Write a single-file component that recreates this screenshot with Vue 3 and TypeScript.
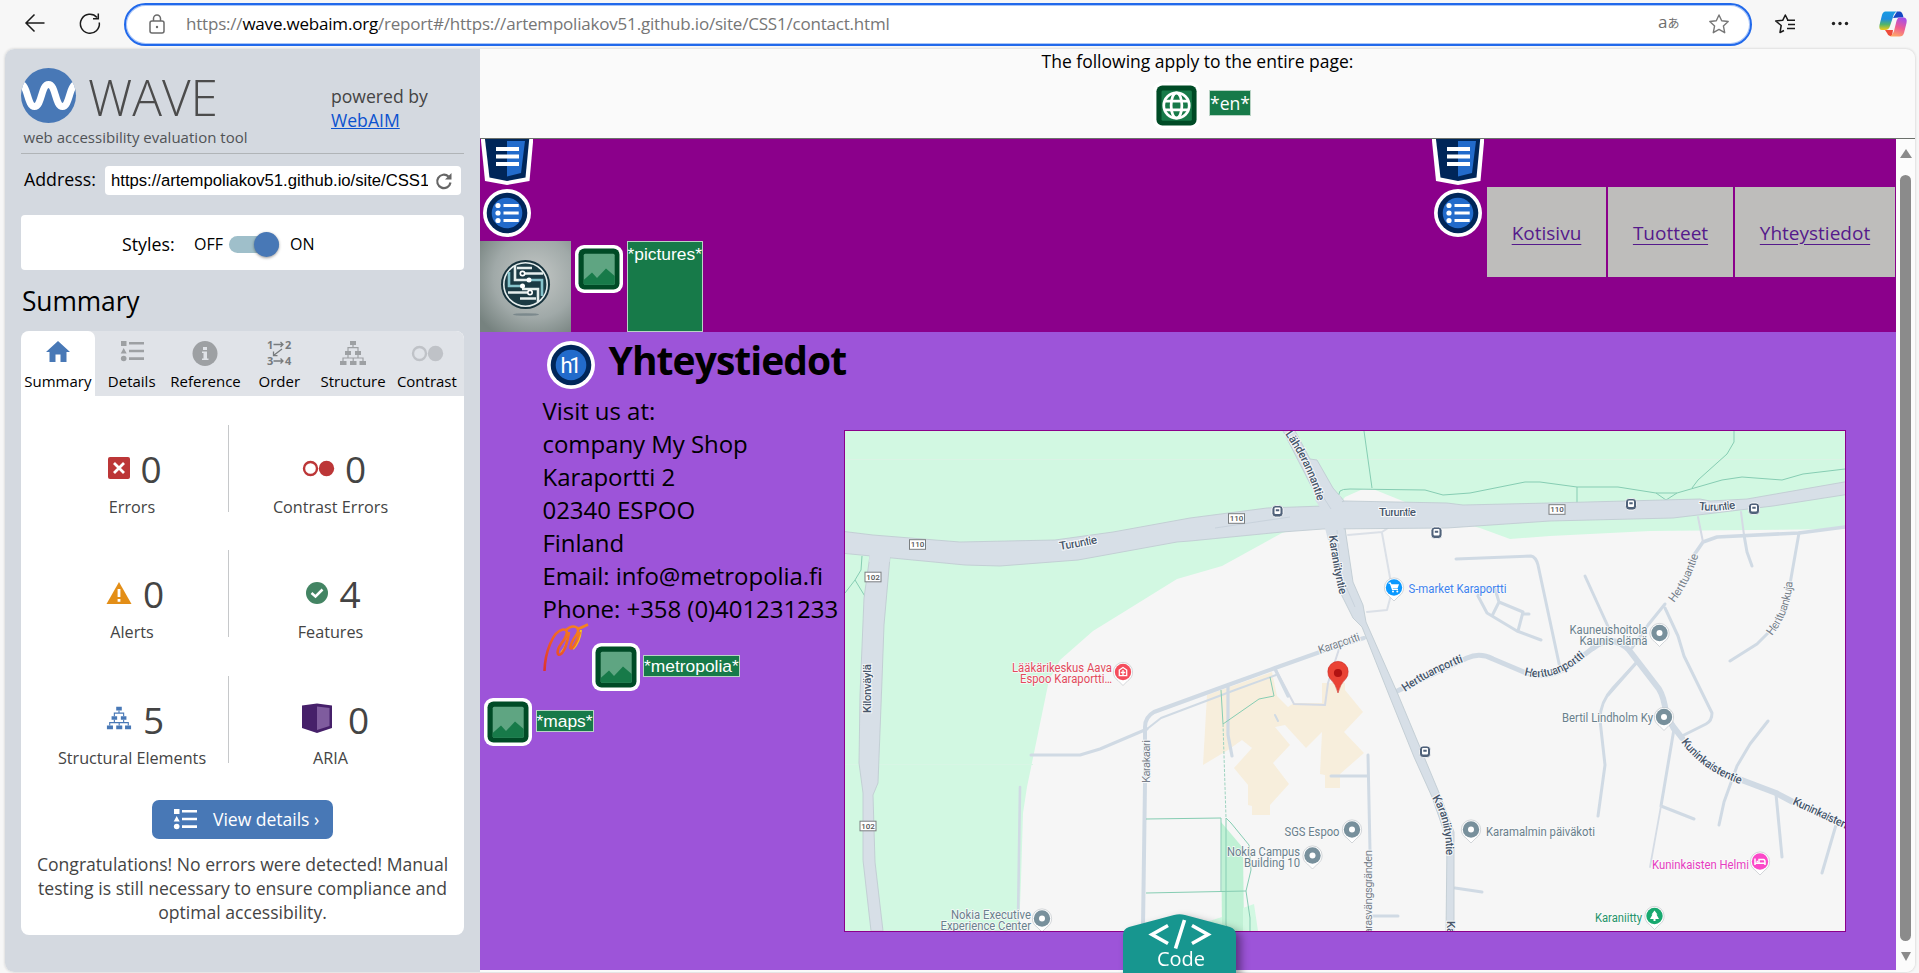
<script setup lang="ts">
interface Tab { id: string; label: string }
interface Stat { id: string; value: number; label: string; gap: number }
interface Road { d: string; w: number; c?: string }
interface Poi { x: number; y: number; color: string; kind: string }
interface PoiLabel { t: string; x: number; y: number; w: number; color: string }
interface RoadLabel { id: string; d: string; t: string; w: number; minor?: boolean }

const tabs: Tab[] = [
  { id: 'home', label: 'Summary' },
  { id: 'list', label: 'Details' },
  { id: 'info', label: 'Reference' },
  { id: 'order', label: 'Order' },
  { id: 'tree', label: 'Structure' },
  { id: 'contrast', label: 'Contrast' },
]

const rows: Stat[][] = [
  [
    { id: 'error', value: 0, label: 'Errors', gap: 10 },
    { id: 'contrast', value: 0, label: 'Contrast Errors', gap: 10 },
  ],
  [
    { id: 'alert', value: 0, label: 'Alerts', gap: 11 },
    { id: 'feature', value: 4, label: 'Features', gap: 11 },
  ],
  [
    { id: 'tree', value: 5, label: 'Structural Elements', gap: 11 },
    { id: 'aria', value: 0, label: 'ARIA', gap: 16 },
  ],
]

const address = ['Visit us at:', 'company My Shop', 'Karaportti 2', '02340 ESPOO', 'Finland', 'Email: info@metropolia.fi', 'Phone: +358 (0)401231233']

const roads: Road[] = [
  { d: 'M1031 755H1080L1100 749 1147 729', w: 3 },
  { d: 'M1143 926L1145 784V727Q1145 717 1154 712L1228 685 1275 668 1320 652 1364 638', w: 4 },
  { d: 'M1147 729L1161 718 1235 690 1276 675', w: 2 },
  { d: 'M1020 787L1018 920', w: 2.6 },
  { d: 'M1228 686V735L1232 756', w: 3.2 },
  { d: 'M1275 668L1294 704 1325 705 1328 683 1340 646', w: 2, c: '#d5dae4' },
  { d: 'M1275 669L1288 696', w: 3.2 },
  { d: 'M1275 715L1278 721', w: 2 },
  { d: 'M1368 755L1370 850M1368 776H1331M1370 916H1398', w: 3 },
  { d: 'M1348 535L1382 532 1388 528M1382 533L1391 583V595L1387 610 1367 612', w: 2, c: '#dbe0e7' },
  { d: 'M1456 559L1531 556Q1536 557 1538 565L1560 668', w: 3 },
  { d: 'M1478 596L1487 613 1517 631 1541 640M1478 596L1481 587 1495 589 1499 602 1492 616M1499 602L1523 612 1518 631M1523 614H1529', w: 3 },
  { d: 'M1393 693L1467 658Q1480 652 1493 659L1526 673Q1550 680 1570 666L1593 648', w: 5 },
  { d: 'M1585 576L1611 633', w: 3 },
  { d: 'M1593 648Q1612 633 1629 650L1659 689Q1664 697 1666 713L1674 729', w: 6 },
  { d: 'M1608 695L1637 662', w: 3 },
  { d: 'M1665 604L1648 625 1632 648', w: 3 },
  { d: 'M1694 555L1703 542 1717 537 1799 533 1845 527', w: 3.6 },
  { d: 'M1703 542L1698 517M1744 535L1741 512', w: 2, c: '#d5dae4' },
  { d: 'M1744 535L1747 552 1752 566', w: 3 },
  { d: 'M1799 533L1790 584M1768 633L1757 644 1730 661', w: 3 },
  { d: 'M1665 608L1678 636 1684 656 1712 713Q1712 721 1706 724L1682 736', w: 3 },
  { d: 'M1637 662L1613 688Q1600 702 1600 720L1605 765 1598 816', w: 3 },
  { d: 'M1674 729L1661 806M1661 806L1694 819', w: 3 },
  { d: 'M1661 806L1650 867', w: 1.8, c: '#d5dce5' },
  { d: 'M1768 721L1750 744 1737 766 1724 802 1719 825', w: 3 },
  { d: 'M1672 725L1682 738M1739 779L1776 793 1793 802', w: 6 },
  { d: 'M1776 794L1782 857', w: 3 },
  { d: 'M1836 825L1822 873', w: 3 },
  { d: 'M1455 888L1482 892', w: 3 },
]

const trails: string[] = [
  'M1364 431L1372 488M1338 497L1340 491Q1342 489 1350 489L1425 490 1443 495 1470 493 1525 482 1540 482 1577 487 1618 487 1656 493 1677 493 1722 480 1742 477 1782 480 1803 474 1845 469',
  'M1734 431V442L1727 454 1698 480 1692 488M1656 493L1666 500 1677 493M1577 487V503',
  'M862 556L861 570 855 580 845 593M855 580L866 598',
  'M1221 690L1223 724 1259 699 1274 696 1270 677',
  'M1146 819L1221 818V891M1146 893L1246 891M1226 818L1231 823 1249 845 1251 870 1246 891 1250 918V931M1226 818V925L1230 931',
]

const roadLabels: RoadLabel[] = [
  { id: 'r1', d: 'M1060 550Q1080 547 1099 543', t: 'Turuntie', w: 38 },
  { id: 'r2', d: 'M1379 516H1420', t: 'Turuntie', w: 37 },
  { id: 'r3', d: 'M1699 510Q1716 512 1739 508', t: 'Turuntie', w: 37 },
  { id: 'r4', d: 'M1285 434Q1307 465 1317 500', t: 'Lähderannantie', w: 75 },
  { id: 'r5', d: 'M1329 536Q1332 563 1341 600', t: 'Karaniityntie', w: 60 },
  { id: 'r6', d: 'M871 713V640', t: 'Kilonväylä', w: 49 },
  { id: 'r7', d: 'M1320 654Q1340 647 1364 639', t: 'Karaportti', w: 43, minor: true },
  { id: 'r8', d: 'M1405 692Q1432 673 1466 661', t: 'Herttuanportti', w: 66 },
  { id: 'r9', d: 'M1524 675Q1554 684 1587 655', t: 'Herttuanportti', w: 67 },
  { id: 'r10', d: 'M1674 603Q1690 583 1699 553', t: 'Herttuantie', w: 54, minor: true },
  { id: 'r11', d: 'M1772 636Q1791 612 1793 578', t: 'Herttuankuja', w: 59, minor: true },
  { id: 'r12', d: 'M1150 783V735', t: 'Karakaari', w: 43, minor: true },
  { id: 'r13', d: 'M1432 798Q1447 820 1446 860', t: 'Karaniityntie', w: 60 },
  { id: 'r14', d: 'M1681 742Q1702 771 1743 785', t: 'Kuninkaistentie', w: 74 },
  { id: 'r15', d: 'M1792 804L1865 838', t: 'Kuninkaistentie', w: 70 },
  { id: 'r16', d: 'M1372 941V846', t: 'Karasvängsgränden', w: 91, minor: true },
  { id: 'r17', d: 'M1447 921V990', t: 'Karaniityntie', w: 60 },
]

const grey = '#78909c'
const pois: Poi[] = [
  { x: 1394, y: 587.5, color: '#0b99ff', kind: 'cart' },
  { x: 1123, y: 672, color: '#f44d5c', kind: 'med' },
  { x: 1659.5, y: 633, color: grey, kind: 'dot' },
  { x: 1664, y: 717, color: grey, kind: 'dot' },
  { x: 1352, y: 829.5, color: grey, kind: 'dot' },
  { x: 1312.5, y: 855.5, color: grey, kind: 'dot' },
  { x: 1471, y: 829.5, color: grey, kind: 'dot' },
  { x: 1760, y: 861.5, color: '#fb48c8', kind: 'bed' },
  { x: 1654.5, y: 916, color: '#18a86f', kind: 'tree' },
  { x: 1042, y: 918.5, color: grey, kind: 'dot' },
]
const lab = '#69808c'
const poiLabels: PoiLabel[] = [
  { t: 'Lääkärikeskus Aava', x: 1012, y: 672, w: 100, color: '#e24a5c' },
  { t: 'Espoo Karaportti…', x: 1020, y: 683, w: 92, color: '#e24a5c' },
  { t: 'S-market Karaportti', x: 1408.5, y: 593, w: 98, color: '#3d82ee' },
  { t: 'Kauneushoitola', x: 1569.5, y: 634, w: 78, color: lab },
  { t: 'Kaunis elämä', x: 1579.5, y: 645, w: 68, color: lab },
  { t: 'Bertil Lindholm Ky', x: 1562, y: 722, w: 91, color: lab },
  { t: 'SGS Espoo', x: 1284.5, y: 835.5, w: 55, color: lab },
  { t: 'Nokia Campus', x: 1227, y: 855.5, w: 73, color: lab },
  { t: 'Building 10', x: 1244, y: 867, w: 56, color: lab },
  { t: 'Karamalmin päiväkoti', x: 1486, y: 835.5, w: 109, color: lab },
  { t: 'Kuninkaisten Helmi', x: 1652, y: 868.5, w: 97, color: '#e63cc0' },
  { t: 'Karaniitty', x: 1595, y: 921.5, w: 47, color: '#25936a' },
  { t: 'Nokia Executive', x: 951, y: 919, w: 80, color: lab },
  { t: 'Experience Center', x: 940.5, y: 930, w: 90.5, color: lab },
]
const stops: number[][] = [[1277.5, 511], [1436.5, 532.5], [1631, 504], [1754, 508.5], [1425, 751.5]]
const shields = [
  { t: '110', x: 917.5, y: 544.5 },
  { t: '110', x: 1236.5, y: 518.5 },
  { t: '110', x: 1557, y: 509.5 },
  { t: '102', x: 873, y: 577 },
  { t: '102', x: 868, y: 826 },
]
</script>

<template>
  <div class="browser">
    <svg class="sprite" aria-hidden="true">
      <symbol id="i-home" viewBox="0 0 28 26"><path d="M14 1L26 12H22.500V22H16.500V14.500H11.500V22H5.500V12H2Z" fill="#4878b6" /></symbol>
      <symbol id="i-list" viewBox="0 0 28 26"><path d="M3 1h5.500v5H3zM5.700 8L8.700 13.500H2.700zM11 2h15v2.600H11zM11 9.700h15v2.600H11zM11 17.300h15v2.600H11z" /><circle cx="5.700" cy="18.500" r="2.800" /></symbol>
      <symbol id="i-info" viewBox="0 0 28 26"><circle cx="14" cy="13.500" r="12.500" /><path d="M12 7h4v3h-4zM11 11.500h5v7h1.500v1.500h-6.500v-1.500h1.500v-5.500H11z" fill="#e0e3e8" /></symbol>
      <symbol id="i-tree" viewBox="0 0 28 26"><path d="M11 1h6v4h-6zM6 11h6v4H6zM16 11h6v4h-6zM1 21h6.500v4H1zM11 21h6.500v4H11zM20.500 21h6.500v4h-6.500z" /><path d="M14 5V8M9 11V7.700H19V11M4 21V18H24V21M14.200 18V21M9 15V18M19 15V18" fill="none" stroke="currentColor" stroke-width="1.200" /></symbol>
      <symbol id="i-contrast" viewBox="0 0 34 26"><circle cx="9.500" cy="13.500" r="6.500" fill="none" stroke="currentColor" stroke-width="2.400" /><circle cx="25.500" cy="13.500" r="7.700" /></symbol>
      <symbol id="i-error" viewBox="0 0 22 26"><rect y="2" width="22" height="22" rx="2" fill="#bc3637" /><path d="M6 8L16 18M16 8L6 18" stroke="#fff" stroke-width="2.800" /></symbol>
      <symbol id="i-alert" viewBox="0 0 26 26"><path d="M13 2L25.500 24H.5Z" fill="#e38e17" /><path d="M11.600 9h2.800v8h-2.800zM11.600 19h2.800v2.700h-2.800z" fill="#fff" /></symbol>
      <symbol id="i-feature" viewBox="0 0 22 26"><circle cx="11" cy="13" r="11" fill="#438463" /><path d="M5.500 13L9.500 16.500 16.500 9.500" fill="none" stroke="#fff" stroke-width="2.500" /></symbol>
      <symbol id="i-aria" viewBox="0 0 30 30"><path d="M0 2.500L15 .5 30 2.500V25L15 30 0 25Z" fill="#46206a" /><path d="M15 3.500L27.500 5V23L15 27Z" fill="#7f5c9e" /></symbol>
      <symbol id="i-shield" viewBox="0 0 52 46"><path d="M-1 -8H53L48.500 42 26 46 4 42Z" fill="#fff" /><path d="M3 -8H49L44.500 38.500 26 42 8.500 38.500Z" fill="#002659" /><path d="M26 2H44L40 34 26 37.500Z" fill="#226bcb" /><path d="M15 10H38M15 17.500H38M15 25H38" stroke="#fff" stroke-width="3.800" /></symbol>
      <symbol id="i-ul" viewBox="0 0 48 48"><circle cx="24" cy="24" r="24" fill="#fff" /><circle cx="24" cy="24" r="20.300" fill="#002659" /><circle cx="24" cy="24" r="15.300" fill="#226bcb" /><g fill="#fff"><circle cx="15" cy="16.500" r="2.600" /><circle cx="15" cy="24" r="2.600" /><circle cx="15" cy="31.500" r="2.600" /><path d="M20.500 14.900h15.200v3.200H20.500zM20.500 22.400h15.200v3.200H20.500zM20.500 29.900h15.200v3.200H20.500z" /></g></symbol>
      <symbol id="i-pic" viewBox="0 0 48 48"><rect width="48" height="48" rx="9" fill="#fff" /><rect x="3.500" y="3.500" width="41" height="41" rx="6" fill="#004b26" /><rect x="8.700" y="8.700" width="31" height="31" rx="1.500" fill="#5fa582" /><path d="M8.700 35L17 27.500 22 33 31 23.500 39.700 31V38.200Q39.700 39.700 38.200 39.700H10.200Q8.700 39.700 8.700 38.200Z" fill="#177a49" /></symbol>
    </svg>

    <header class="toolbar">
      <svg class="nav-icons" viewBox="0 0 124 48" fill="none" stroke="#1b1b1b" stroke-width="1.500">
        <path d="M44.500 23H26M34.500 14.500L26 23 34.500 31.500" />
        <path d="M97 17.500A9.500 9.500 0 1 0 99.300 22.500M98.300 13.500V18.700H93" />
      </svg>
      <div class="omnibox">
        <svg class="lock" viewBox="0 0 18 22" fill="none" stroke="#6b6b6b" stroke-width="1.500"><rect x="2" y="8" width="14" height="12" rx="2" /><path d="M5.500 8V5.500a3.500 3.500 0 0 1 7 0V8" /><circle cx="9" cy="14" r="1.200" fill="#6b6b6b" stroke="none" /></svg>
        <div class="url">https://<b>wave.webaim.org</b>/report#/https://artempoliakov51.github.io/site/CSS1/contact.html</div>
        <div class="translate">a<span>あ</span></div>
        <svg class="star" viewBox="0 0 22 22" fill="none" stroke="#777" stroke-width="1.400" stroke-linejoin="round"><path d="M11 2L13.700 7.800 20.200 8.500 15.400 12.900 16.700 19.700 11 16.400 5.300 19.700 6.600 12.900 1.800 8.500 8.300 7.800Z" /></svg>
      </div>
      <svg class="actions" viewBox="1752 0 167 48">
        <g fill="none" stroke="#1b1b1b" stroke-width="1.500" stroke-linejoin="round"><path d="M1784 30.500L1780 32.500 1781.200 25.500 1775.700 21 1782.700 20.300 1785.300 15 1788 20.300M1787 20.300H1795M1788 24.500H1795M1787 28.500H1795" /></g>
        <g fill="#222"><circle cx="1833.500" cy="23.500" r="1.700" /><circle cx="1840" cy="23.500" r="1.700" /><circle cx="1846.500" cy="23.500" r="1.700" /></g>
        <defs>
          <linearGradient id="cp1" x1="0" y1="0" x2="0" y2="1"><stop offset="0" stop-color="#189be2" /><stop offset=".4" stop-color="#1f8ee0" /><stop offset=".7" stop-color="#52b56b" /><stop offset="1" stop-color="#f4ca16" /></linearGradient>
          <linearGradient id="cp2" x1=".6" y1="0" x2=".3" y2="1"><stop offset="0" stop-color="#a74fe8" /><stop offset=".5" stop-color="#ee5c93" /><stop offset="1" stop-color="#ffa765" /></linearGradient>
        </defs>
        <path d="M1893 18L1897 11.500H1900Q1902.500 12 1903.500 17.500H1899Z" fill="#1548c4" />
        <path d="M1885.500 11.500H1897Q1894 12.500 1893 17L1890 26Q1889 30 1885 30H1882Q1878.500 30 1879.500 25L1882 15Q1883 11.500 1885.500 11.500Z" fill="url(#cp1)" />
        <path d="M1885 30H1893L1892 36H1890Q1888 36 1887 33Z" fill="#ee4b3b" />
        <path d="M1899 17.500H1904Q1907.500 18 1906.500 23L1904 33Q1903 36.500 1899.500 36.500H1890Q1893 35 1894 31L1896 23Q1897 18 1899 17.500Z" fill="url(#cp2)" />
      </svg>
    </header>

    <div class="page">
      <aside class="sidebar">
        <div class="brand">
          <svg class="logo" viewBox="21 49 310 104">
            <clipPath id="disc"><circle cx="48.500" cy="95.500" r="27.500" /></clipPath>
            <circle cx="48.500" cy="95.500" r="27.500" fill="#4878b6" />
            <path d="M20 84C28 84 27 106.500 34.500 106.500S41 84.500 48.500 84.500 55 106.500 62.500 106.500 69 84 77 84" fill="none" stroke="#fff" stroke-width="7" clip-path="url(#disc)" />
            <text x="88" y="115.500" font-size="49" font-weight="300" fill="#4c4c4c" textLength="130" lengthAdjust="spacingAndGlyphs">WAVE</text>
            <text x="23.500" y="143" font-size="15" fill="#505356" textLength="224">web accessibility evaluation tool</text>
          </svg>
          <div class="powered">powered by<br><a>WebAIM</a></div>
        </div>
        <div class="address">
          <label>Address:</label>
          <div class="field">
            <span>https://artempoliakov51.github.io/site/CSS1</span>
            <svg viewBox="0 0 18 18" fill="none" stroke="#666" stroke-width="2.200"><path d="M15.500 10.500A6.700 6.700 0 1 1 13.500 4.500" /><path d="M16.500 1V7.500H10Z" fill="#666" stroke="none" /></svg>
          </div>
        </div>
        <div class="styles"><span class="st">Styles:</span><span class="off">OFF</span><i class="toggle"><i class="knob" /></i><span>ON</span></div>
        <h2>Summary</h2>
        <section class="panel">
          <nav class="tabs">
            <div v-for="(t, i) in tabs" :key="t.id" class="tab" :class="{ active: i === 0, pale: t.id === 'contrast' }">
              <svg v-if="t.id === 'order'" class="tab-icon" viewBox="0 0 28 26">
                <g font-weight="700" font-size="11" fill="#777b7d"><text x="2" y="8.600">1</text><text x="20" y="8.600">2</text><text x="2" y="25">3</text><text x="20" y="25">4</text></g>
                <path d="M8.500 4.500H18M15.500 2L18 4.500 15.500 7M8.500 21H18M15.500 18.500L18 21 15.500 23.500M17 9L8.500 15.500M8.500 11.500V15.700H12.500" fill="none" stroke="#777b7d" stroke-width="1.300" />
              </svg>
              <svg v-else class="tab-icon" :class="{ wide: t.id === 'contrast' }"><use :href="'#i-' + t.id" /></svg>
              <span>{{ t.label }}</span>
            </div>
          </nav>
          <div class="stats">
            <div v-for="(r, i) in rows" :key="i" class="row">
              <div v-for="s in r" :key="s.label" class="stat">
                <div class="num" :class="'n-' + s.id"><svg :class="'ic-' + s.id"><use :href="'#i-' + s.id" /></svg><span :style="{ marginLeft: s.gap + 'px' }">{{ s.value }}</span></div>
                <div class="cap">{{ s.label }}</div>
              </div>
            </div>
          </div>
          <button class="details"><svg><use href="#i-list" /></svg><span>View details ›</span></button>
          <p>Congratulations! No errors were detected! Manual testing is still necessary to ensure compliance and optimal accessibility.</p>
        </section>
      </aside>

      <main class="report">
        <div class="global">
          <div>The following apply to the entire page:</div>
          <div class="global-icons">
            <svg class="globe" viewBox="0 0 48 48"><rect width="48" height="48" rx="9" fill="#fff" /><rect x="3.500" y="3.500" width="41" height="41" rx="6" fill="#004b26" /><rect x="8.700" y="8.700" width="31" height="31" rx="1.500" fill="#177a49" /><g fill="none" stroke="#fff" stroke-width="2.800"><circle cx="24" cy="24" r="13" /><ellipse cx="24" cy="24" rx="5.500" ry="13" /><path d="M12 19.500H36M12 28.500H36" /></g></svg>
            <span class="tag en">*en*</span>
          </div>
        </div>
        <div class="frame">
          <div class="site">
            <div class="site-head">
              <div class="head-left">
                <svg class="shield"><use href="#i-shield" /></svg>
                <svg class="ul"><use href="#i-ul" /></svg>
                <div class="head-row">
                  <svg class="site-logo" viewBox="0 0 91 91">
                    <defs><radialGradient id="lg" cx=".6" cy=".4" r=".75"><stop offset="0" stop-color="#c4c8c6" /><stop offset=".6" stop-color="#a0a9a8" /><stop offset="1" stop-color="#76827f" /></radialGradient></defs>
                    <rect width="91" height="91" fill="url(#lg)" />
                    <ellipse cx="46" cy="73.500" rx="13" ry="1.300" fill="#6b7b80" opacity=".7" />
                    <circle cx="45.500" cy="43.500" r="24.500" fill="#16323c" />
                    <circle cx="45.500" cy="43.500" r="21.700" fill="#1b3a44" stroke="#e6eeed" stroke-width="1.600" />
                    <g fill="none" stroke="#e6eeed" stroke-width="2.600"><path d="M44 32.500H63M35 25V39H49M52 27H37M58 61V48H42M47 51.500H28M40 57.500H56" /><path d="M29 31V45H42M62 55V39H49" stroke="#86c3cb" /></g>
                    <g fill="#16323c" stroke="#fff" stroke-width="1.700"><circle cx="42.500" cy="32.500" r="2.200" /><circle cx="50" cy="51.500" r="2.200" /></g><circle cx="49" cy="39" r="2.500" fill="#fff" /><circle cx="42.500" cy="45" r="2.500" fill="#fff" />
                  </svg>
                  <svg class="pic"><use href="#i-pic" /></svg>
                  <span class="tag tall">*pictures*</span>
                </div>
              </div>
              <div class="head-right">
                <div class="marks"><svg class="shield"><use href="#i-shield" /></svg><svg class="ul"><use href="#i-ul" /></svg></div>
                <nav class="menu"><a class="m1">Kotisivu</a><a class="m2">Tuotteet</a><a class="m3">Yhteystiedot</a></nav>
              </div>
            </div>
            <div class="site-body">
              <div class="info">
                <div class="title">
                  <svg viewBox="0 0 48 48"><circle cx="24" cy="24" r="24" fill="#fff" /><circle cx="24" cy="24" r="20.300" fill="#002659" /><circle cx="24" cy="24" r="15.300" fill="#226bcb" /><text x="24" y="32" text-anchor="middle" font-family="Roboto, sans-serif" font-size="22" fill="#fff" textLength="21">h1</text></svg>
                  <h1>Yhteystiedot</h1>
                </div>
                <div class="lines"><div v-for="l in address" :key="l">{{ l }}</div></div>
                <div class="metro">
                  <svg class="swoosh" viewBox="0 0 46 48" fill="none" stroke-linecap="butt">
                    <defs><linearGradient id="sw" x1="0" y1="1" x2=".7" y2="0"><stop offset="0" stop-color="#dd3230" /><stop offset=".5" stop-color="#ee5b26" /><stop offset="1" stop-color="#f6831e" /></linearGradient></defs>
                    <path d="M25.500 9Q25 22 18 30M38 7Q37 19 30 26" stroke="#f9c51c" stroke-width="2" />
                    <path d="M1.500 48C2 29 10 8 20 6.500 27 6 23 15 18 21 13 28 14 34 18 31 22 28 25 17 26 9M22 8C30 0 38 4 34 11 30 17 27 21 27.500 25 29 27 34 20 37 9M34 6Q38 5 45 1.500" stroke="url(#sw)" stroke-width="2.600" />
                  </svg>
                  <svg class="pic"><use href="#i-pic" /></svg><span class="tag">*metropolia*</span>
                </div>
                <div class="maps"><svg class="pic"><use href="#i-pic" /></svg><span class="tag">*maps*</span></div>
              </div>

              <svg class="map" viewBox="845 431 1000 500">
                <rect x="845" y="431" width="1000" height="500" fill="#d2f8e2" />
                <path d="M1019 931L1021 880 1023 813 1027 787 1049 680 1060 660 1093 631 1127 610 1177 579 1222 566 1282 533 1330 520 1450 520 1480 528 1510 539 1550 536 1650 531 1845 529V931Z" fill="#f6f6f6" />
                <path d="M1340 504L1345 497 1363 489H1373L1410 504Z" fill="#f6f6f6" />
                <path d="M845 459.500H1845" stroke="#dcf3e5" /><path d="M845 764.500H1033" stroke="#d8f6e5" />
                <path d="M1221 822L1243 848 1244 931H1222Z" fill="#c0f1d5" /><path d="M1243 908L1254 904 1258 931H1243ZM1222 917L1200 924 1222 931Z" fill="#d2f8e2" />
                <path d="M1207 695L1272 672 1277 696 1288 707 1294 703H1322V683H1345V690L1363 712 1344 732 1364 753 1340 774V788H1325V775L1320 774 1322 732 1306 748 1285 725 1275 727 1290 745 1273 763 1289 784 1270 805V815H1252V806L1248 805V785L1234 768 1252 748 1242 740 1228 750 1203 765Z" fill="#f7eedc" />
                <path v-for="(r, i) in roads" :key="'rd' + i" :d="r.d" :stroke-width="r.w" :stroke="r.c ?? '#d0dae4'" fill="none" stroke-linecap="round" stroke-linejoin="round" />
                <path v-for="(t, i) in trails" :key="'tr' + i" :d="t" stroke="#86cdb3" stroke-width="1" fill="none" />
                <path d="M1223 724L1226 818" stroke="#9ed3c0" stroke-dasharray="3 1.500" />
                <g fill="#d7dfe7" stroke="#c1ccd3" stroke-width=".9" stroke-linejoin="round">
                  <path d="M870 555L864 598 860 695 859 763 863 793V860L871 931H883L875 862 873 795 878 783 882 680 884 625 890 557Z" />
                  <path d="M1280 425L1322 507 1345 502 1333 488 1317 460 1310 459 1292 425Z" />
                  <path d="M1327 528L1332 552 1340 592 1353 618 1362 627 1389 695 1414 757 1432 797 1447 840 1446 935H1454V832L1440 795 1397 692 1366 622 1363 605 1353 582 1345 528Z" />
                  <path d="M840 531L873 535 960 542 1055 540 1113 532 1190 518 1267 508 1323 506 1345 501 1447 503 1463 505 1550 503 1700 499 1710 501 1747 499 1850 481V494L1773 506 1673 518 1550 521 1447 528 1323 529 1282 532 1190 541 1177 542 1078 560 1000 566 965 565 840 553Z" />
                </g>
                <path d="M1324 524L1328 540 1345 540 1343 524ZM1315 500L1323 512 1345 512 1340 495ZM870 548L869 562 889.500 562 891 548Z" fill="#d7dfe7" />
                <path d="M1337 530L1341 575 1355 607M1322 495L1331 509M1215 528L1290 517" stroke="#c6d0da" stroke-width=".9" fill="none" />
                <defs><path v-for="l in roadLabels" :id="l.id" :key="l.id" :d="l.d" /></defs>
                <text v-for="l in roadLabels" :key="'t' + l.id" class="road-label" :class="{ minor: l.minor }" :textLength="l.w"><textPath :href="'#' + l.id">{{ l.t }}</textPath></text>
                <g v-for="s in shields" :key="s.x + '-' + s.y" :transform="`translate(${s.x} ${s.y})`"><rect x="-8" y="-4.800" width="16" height="9.600" fill="#fff" stroke="#7a7e80" /><text y="2.900" text-anchor="middle" class="shield-text">{{ s.t }}</text></g>
                <g v-for="s in stops" :key="'s' + s[0]" :transform="`translate(${s[0]} ${s[1]})`"><rect x="-5.500" y="-5.500" width="11" height="11.500" rx="3.500" fill="#50627a" stroke="#fff" stroke-width=".8" /><rect x="-3" y="-3.500" width="6" height="6.500" rx="1" fill="#fff" /><path d="M-1.700 -1.700H1.700V.3H-1.700ZM-2.500 3.500L-1.500 2M2.500 3.500L1.500 2" fill="#50627a" /></g>
                <g v-for="p in pois" :key="p.x" :transform="`translate(${p.x} ${p.y})`">
                  <path d="M0 13.500L-5 8.500Q-9.600 5.500 -9.600 0A9.600 9.600 0 0 1 9.600 0Q9.600 5.500 5 8.500Z" fill="#fff" stroke="#b9bec2" stroke-width=".6" />
                  <circle r="8.200" :fill="p.color" />
                  <circle v-if="p.kind === 'dot'" r="3" fill="#fff" />
                  <g v-else-if="p.kind === 'cart'"><path d="M-5.500 -4.300H-3.600L-1.500 2H4" fill="none" stroke="#fff" stroke-width="1.200" /><path d="M-3.200 -3.200H5L3.500 1H-1.800Z" fill="#fff" /><circle cx="-1" cy="4" r="1" fill="#fff" /><circle cx="3.300" cy="4" r="1" fill="#fff" /></g>
                  <path v-else-if="p.kind === 'med'" d="M-3.700 3.700V-2L0 -4.500 3.700 -2V3.700ZM0 -2V3M-2.300 .5H2.300" fill="none" stroke="#fff" stroke-width="1.300" />
                  <path v-else-if="p.kind === 'bed'" d="M-5 -3V3.500M-5 1.800H5V3.500M-1 1V-2H3.500Q5 -2 5 1M-3.500 0H-2" fill="none" stroke="#fff" stroke-width="1.500" />
                  <path v-else d="M0 -5.500L3 -1.500H2L4.500 3H1V5H-1V3H-4.500L-2 -1.500H-3Z" fill="#fff" />
                </g>
                <text v-for="l in poiLabels" :key="l.t" :x="l.x" :y="l.y" :fill="l.color" :textLength="l.w" lengthAdjust="spacingAndGlyphs" class="poi-label">{{ l.t }}</text>
                <path d="M1338 693Q1336 684 1330 678.500Q1327.800 676 1327.800 671.500A10.200 10.200 0 0 1 1348.200 671.500Q1348.200 676 1346 678.500Q1340 684 1338 693Z" fill="#ea4335" stroke="#c5221f" stroke-width=".5" /><circle cx="1338" cy="673" r="4.100" fill="#b11312" />
              </svg>
            </div>
          </div>
          <div class="scroll"><i class="up" /><i class="thumb" /><i class="down" /></div>
        </div>
      </main>
    </div>

    <svg class="code" viewBox="0 0 124 59">
      <path d="M0 59V21Q0 15 6 13L51 1Q56.500 -.5 62 1L107 13Q113 15 113 21V59Z" fill="#17968f" />
      <path d="M45 11.500L29 20.500 45 29.500M69 11.500L85 20.500 69 29.500M61.500 6L52.500 34.500" fill="none" stroke="#fff" stroke-width="3.600" />
      <text x="34" y="52" font-size="20" fill="#fff" textLength="48">Code</text>
    </svg>
  </div>
</template>

<style>
body { margin: 0; overflow: hidden; }
</style>

<style scoped>
* { box-sizing: border-box; }
.browser { position: relative; width: 1919px; height: 973px; background: #f7f7f7; font-family: "Open Sans", "Noto Sans", sans-serif; color: #000; overflow: hidden; display: flex; flex-direction: column; }
.browser svg { display: block; flex: none; fill: currentColor; }
.browser .sprite { position: absolute; width: 0; height: 0; }
.toolbar { display: flex; height: 48px; flex: none; }
.browser .nav-icons { width: 124px; height: 48px; fill: none; }
.omnibox { width: 1628px; height: 43px; margin-top: 3px; border: 2px solid #2169eb; border-radius: 22px; background: #fff; display: flex; align-items: center; box-shadow: inset 0 0 0 1px #a9c5f7; }
.browser .lock { width: 18px; height: 22px; margin: -2px 0 0 22px; fill: none; }
.url { flex: none; margin: -2px 0 0 20px; font-size: 17px; color: #767676; letter-spacing: -.2px; width: 1472px; white-space: nowrap; line-height: 36px; }
.url b { font-weight: 400; color: #000; }
.translate { flex: none; width: 30px; font-size: 17px; color: #6f6f6f; line-height: 30px; margin: -4px 0 0; white-space: nowrap; }
.translate span { font-family: "Noto Sans CJK JP", sans-serif; font-size: 12px; }
.browser .star { width: 22px; height: 22px; margin: -1px 0 0 20px; fill: none; }
.browser .actions { width: 167px; height: 48px; }

.page { flex: none; margin: 1px 4px 0 5px; height: 923px; display: flex; border-radius: 9px; overflow: hidden; background: #fafafa; box-shadow: 0 0 2px 1px #e0e0e0; }
.sidebar { width: 475px; flex: none; background: #d4d9e0; padding: 0 16px; }
.brand { height: 105px; width: 443px; border-bottom: 1px solid #b0b4b7; display: flex; }
.browser .logo { width: 310px; height: 104px; }
.powered { font-size: 17.600px; line-height: 24px; color: #444; padding-top: 35px; }
.powered a { color: #0b52cf; text-decoration: underline; }
.address { display: flex; align-items: center; height: 29px; margin-top: 12px; }
.address label { font-size: 17.800px; width: 84px; padding-left: 3px; margin-top: -3px; }
.field { width: 356px; height: 29px; background: #fff; border-radius: 4px; display: flex; align-items: center; padding-left: 6px; }
.field span { width: 317px; overflow: hidden; white-space: nowrap; font: 16.700px/24px "Liberation Sans", Arial, sans-serif; letter-spacing: -.02px; }
.browser .field svg { width: 18px; height: 18px; margin-left: 7px; fill: none; }
.styles { width: 443px; height: 55px; margin-top: 20px; background: #fff; border-radius: 4px; display: flex; align-items: center; padding: 4px 0 0 101px; font-size: 16px; }
.styles span { margin-top: -2px; }
.st { font-size: 17.800px; width: 72px; }
.off { width: 35px; }
.toggle { display: block; width: 50px; height: 17px; margin: -1px 11px 0 0; border-radius: 9px; background: #9fbfca; }
.knob { display: block; width: 25px; height: 25px; margin: -4px 0 0 25px; border-radius: 50%; background: #4878b6; box-shadow: 0 1px 3px #0006; }
h2 { margin: 13px 0 0 1px; font-size: 26.400px; line-height: 36px; font-weight: 400; letter-spacing: -.1px; }
.panel { width: 443px; height: 604px; margin-top: 12px; background: #fff; border-radius: 8px; overflow: hidden; }
.tabs { display: flex; height: 65px; background: #e0e3e8; }
.tab { width: 73.8px; display: flex; flex-direction: column; align-items: center; font-size: 15px; line-height: 20px; color: #9da0a3; }
.tab span { color: #000; margin-top: 5px; }
.tab.active { background: #fff; border-radius: 7px 7px 0 0; }
.tab.pale { color: #bfc2c7; }
.browser .tab-icon { width: 28px; height: 26px; margin-top: 9px; }
.browser .tab-icon.wide { width: 34px; }
.stats { padding: 29px 0 0 21px; }
.row { display: flex; height: 87px; margin-bottom: 38.400px; }
.stat { width: 187px; color: #444; text-align: center; }
.stat:first-child { border-right: 1px solid #c6c8ca; }
.stat + .stat { margin-left: 11px; }
.num { display: flex; justify-content: center; align-items: center; height: 68px; padding-top: 20px; font-size: 37px; line-height: 46px; }
.num.n-aria { padding-left: 4px; }
.cap { font-size: 16.200px; line-height: 20px; margin: 4px 6px 0 0; white-space: nowrap; }
.browser .num svg { width: 22px; height: 26px; margin-top: -3px; }
.browser .num .ic-contrast { width: 34px; color: #bc3637; }
.browser .num .ic-alert, .browser .num .ic-tree { width: 26px; color: #4878b6; }
.browser .num .ic-aria { width: 30px; height: 30px; }
.details { display: flex; align-items: center; width: 181px; height: 39px; margin: -1px 0 0 131px; padding: 0 0 0 19px; border: 0; border-radius: 7px; background: #4878b6; color: #fff; font: 17.600px "Open Sans", sans-serif; }
.browser .details svg { width: 28px; height: 26px; margin-top: 3px; }
.details span { margin: -1px 0 0 14px; white-space: nowrap; letter-spacing: -.05px; }
p { margin: 13px 12px 0; font-size: 17.600px; line-height: 24px; color: #444; text-align: center; }

.report { flex: 1; display: flex; flex-direction: column; min-width: 0; }
.global { height: 90px; flex: none; border-bottom: 1px solid #6b706b; text-align: center; font-size: 17.500px; line-height: 25px; }
.global-icons { display: flex; padding-left: 673px; }
.browser .globe { width: 47px; height: 47px; margin-top: 8px; }
.tag { display: block; flex: none; background: #177a49; border: 1px solid #b9d3c5; color: #fff; font: 17.400px/20px "Liberation Sans", Arial, sans-serif; height: 22px; white-space: nowrap; }
.tag.en { font: 17.600px/24px "Open Sans", sans-serif; height: 26px; margin: 16px 0 0 9px; }
.tag.tall { height: 91px; line-height: 24px; }
.frame { display: flex; flex: 1; min-height: 0; }
.site { width: 1416px; height: 831px; background: #9d54d9; font-family: "Open Sans", sans-serif; flex: none; }
.site-head { height: 193px; background: #8b008b; display: flex; justify-content: space-between; }
.browser .shield { width: 52px; height: 46px; margin-left: 1px; }
.browser .ul { width: 48px; height: 48px; margin: 4px 0 0 3px; }
.head-row { display: flex; margin-top: 4px; }
.browser .site-logo { width: 91px; height: 91px; }
.browser .pic { width: 48px; height: 48px; margin: 3.500px 4px 0 3.500px; }
.head-right { display: flex; }
.marks { width: 56px; }
.menu { display: flex; gap: 2px; margin-top: 48px; padding-right: 1px; }
.menu a { height: 90px; background: #bebdbb; color: #551a8b; text-decoration: underline; text-underline-offset: 4px; font-size: 19px; line-height: 92px; text-align: center; }
.m1 { width: 119px; } .m2 { width: 125px; } .m3 { width: 160px; }
.site-body { display: flex; }
.info { width: 364px; flex: none; padding-left: 62.500px; white-space: nowrap; }
.title { display: flex; height: 62px; }
.browser .title svg { width: 48px; height: 48px; margin: 9px 0 0 4px; }
h1 { margin: 0 0 0 14px; font-size: 39px; line-height: 56px; letter-spacing: -.95px; }
.lines { font-size: 24px; line-height: 33px; letter-spacing: -.05px; }
.metro { display: flex; height: 75px; }
.browser .swoosh { width: 46px; height: 48px; margin-top: -2px; fill: none; }
.metro .tag { margin-top: 29.500px; }
.browser .metro .pic { margin: 17.500px 3.500px 0 3px; }
.maps { display: flex; margin-left: -62.500px; }
.browser .maps .pic { margin: -2.500px 4px 0 3.500px; }
.maps .tag { margin-top: 9.500px; }
.browser .map { width: 1002px; height: 502px; margin-top: 98px; border: 1px solid #8b008b; font-family: Roboto, sans-serif; }
.road-label { font-size: 11.500px; font-weight: 500; fill: #47566a; stroke: #f6f8fa; stroke-width: 2px; paint-order: stroke; }
.road-label.minor { fill: #777f89; font-weight: 400; }
.poi-label { font-size: 12px; stroke: #fafafa; stroke-width: 1.500px; paint-order: stroke; }
.shield-text { font-size: 8px; font-weight: 500; fill: #555; }
.scroll { width: 19px; display: flex; flex-direction: column; align-items: center; background: #fcfcfc; }
.up { border: 6px solid transparent; border-top: 0; border-bottom: 9px solid #8b8b8b; margin-top: 10px; }
.thumb { width: 11px; height: 766px; margin-top: 17px; border-radius: 6px; background: #8b8b8b; }
.down { border: 5.500px solid transparent; border-bottom: 0; border-top: 9px solid #8b8b8b; margin-top: 11px; }
.browser .code { position: absolute; left: 1123px; top: 914px; width: 124px; height: 59px; filter: drop-shadow(5px 4px 4px #0006); }
</style>
